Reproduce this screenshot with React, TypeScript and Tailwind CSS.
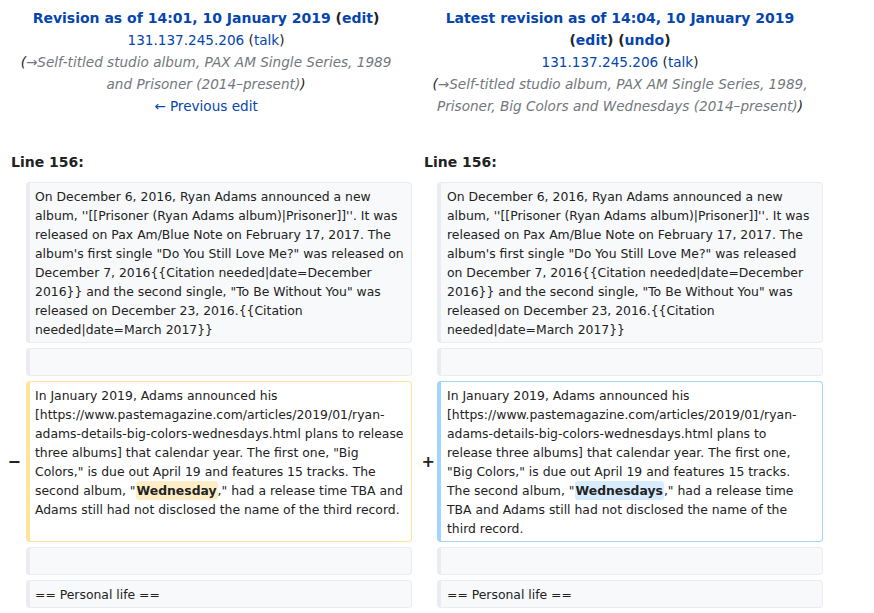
import React from 'react';

const link = 'text-[#0645ad]';

const Comment: React.FC<{ text: string }> = ({ text }) => (
  <span className="italic text-[#222]">
    (<span className="text-[#72777d]">→{text}</span>)
  </span>
);

const Box: React.FC<{ kind?: 'ctx' | 'del' | 'add'; side: 'l' | 'r'; children?: React.ReactNode }> = ({
  kind = 'ctx',
  side,
  children,
}) => {
  const tone =
    kind === 'del'
      ? 'bg-white border-[#ffe49c]'
      : kind === 'add'
        ? 'bg-white border-[#a3d3ff]'
        : 'bg-[#f8f9fa] border-[#eaecf0]';
  const pad = side === 'l' ? 'pl-[5px] pr-[4px]' : 'pl-[6px] pr-[7px]';
  return (
    <div className={`border border-l-4 rounded-[4px] pt-[4px] pb-[3px] text-[12.4px] leading-[19px] text-[#222] min-h-[28px] ${tone} ${pad}`}>
      {children}
    </div>
  );
};

const Marker: React.FC<{ sign?: string; side: 'l' | 'r' }> = ({ sign, side }) => (
  <div className={`flex items-center justify-end text-[16px] font-bold text-[#222] ${side === 'l' ? 'pr-[5px]' : 'pr-[2px]'}`}>
    {sign}
  </div>
);

const para1 =
  'On December 6, 2016, Ryan Adams announced a new album, \'\'[[Prisoner (Ryan Adams album)|Prisoner]]\'\'. It was released on Pax Am/Blue Note on February 17, 2017. The album\'s first single "Do You Still Love Me?" was released on December 7, 2016{{Citation needed|date=December 2016}} and the second single, "To Be Without You" was released on December 23, 2016.{{Citation needed|date=March 2017}}';

const pre =
  'In January 2019, Adams announced his [https://www.pastemagazine.com/articles/2019/01/ryan-adams-details-big-colors-wednesdays.html plans to release three albums] that calendar year. The first one, "Big Colors," is due out April 19 and features 15 tracks. The second album, "';
const post = '," had a release time TBA and Adams still had not disclosed the name of the third record.';

export default function App() {
  return (
    <div className="w-[874px] h-[613px] bg-white overflow-hidden" style={{ fontFamily: '"DejaVu Sans", sans-serif' }}>
      <div className="grid grid-cols-[412px_416px] pt-[7px] text-[13.6px] leading-[22px] text-[#222] text-center">
        <div className="px-[10px]">
          <div className="font-bold text-[14px]">
            <span className={link}>Revision as of 14:01, 10 January 2019</span> (<span className={link}>edit</span>)
          </div>
          <div>
            <span className={link}>131.137.245.206</span> (<span className={link}>talk</span>)
          </div>
          <div>
            <Comment text="Self-titled studio album, PAX AM Single Series, 1989 and Prisoner (2014–present)" />
          </div>
          <div className={link}>← Previous edit</div>
        </div>
        <div className="px-[10px]">
          <div className="font-bold text-[14px]">
            <span className={link}>Latest revision as of 14:04, 10 January 2019</span> (<span className={link}>edit</span>) (
            <span className={link}>undo</span>)
          </div>
          <div>
            <span className={link}>131.137.245.206</span> (<span className={link}>talk</span>)
          </div>
          <div>
            <Comment text="Self-titled studio album, PAX AM Single Series, 1989, Prisoner, Big Colors and Wednesdays (2014–present)" />
          </div>
        </div>
      </div>

      <div className="grid grid-cols-[412px_416px] mt-[34px] text-[14px] leading-[22px] font-bold text-[#222]">
        <div className="pl-[11px]">Line 156:</div>
        <div className="pl-[12px]">Line 156:</div>
      </div>

      <div className="grid grid-cols-[26px_386px_25px_386px] gap-y-[5px] mt-[9px]">
        <Marker side="l" />
        <Box side="l">{para1}</Box>
        <Marker side="r" />
        <Box side="r">{para1}</Box>

        <Marker side="l" />
        <Box side="l" />
        <Marker side="r" />
        <Box side="r" />

        <Marker side="l" sign="−" />
        <Box side="l" kind="del">
          {pre}
          <span className="font-bold bg-[#feeec8] rounded-[3px] px-[1px] py-[2px]">Wednesday</span>
          {post}
        </Box>
        <Marker side="r" sign="+" />
        <Box side="r" kind="add">
          {pre}
          <span className="font-bold bg-[#d8ecff] rounded-[3px] px-[1px] py-[2px]">Wednesdays</span>
          {post}
        </Box>

        <Marker side="l" />
        <Box side="l" />
        <Marker side="r" />
        <Box side="r" />

        <Marker side="l" />
        <Box side="l">== Personal life ==</Box>
        <Marker side="r" />
        <Box side="r">== Personal life ==</Box>
      </div>
    </div>
  );
}
